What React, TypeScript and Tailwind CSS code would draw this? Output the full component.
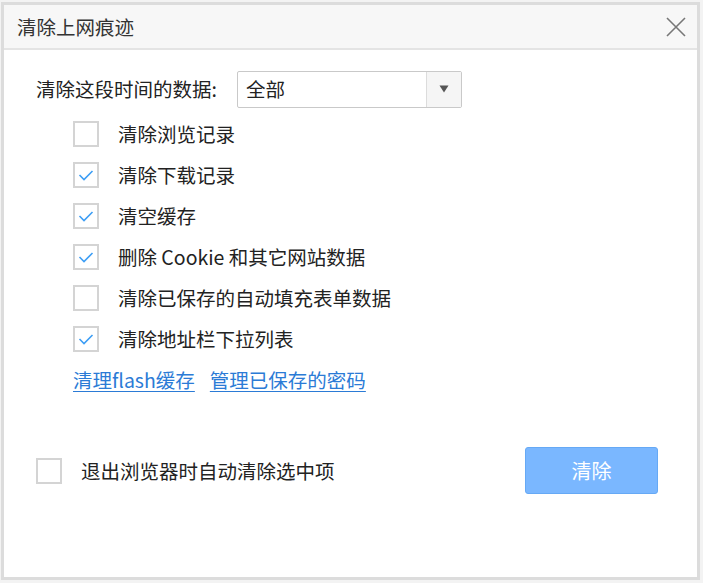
const items = [
  { label: '清除浏览记录', checked: false },
  { label: '清除下载记录', checked: true },
  { label: '清空缓存', checked: true },
  { label: '删除 Cookie 和其它网站数据', checked: true },
  { label: '清除已保存的自动填充表单数据', checked: false },
  { label: '清除地址栏下拉列表', checked: true },
];

const Check = ({ checked }: { checked: boolean }) => (
  <span className="w-[26px] h-[26px] border-2 border-[#d4d4d4] bg-white flex items-center justify-center shrink-0">
    {checked && (
      <svg width="16" height="12" viewBox="0 0 16 12" fill="none">
        <path d="M1.5 6 L6 10.5 L14.5 2" stroke="#3d9ef5" strokeWidth="1.6" />
      </svg>
    )}
  </span>
);

export default function App() {
  return (
    <div
      className="w-[703px] h-[583px] bg-[#f3f3f3] pl-[1px] pt-[2px] text-[#222]"
      style={{ fontFamily: '"Microsoft YaHei", "Noto Sans CJK SC", sans-serif' }}
    >
      <div className="w-[699px] h-[578px] border-[3px] border-[#dcdcdc] bg-white flex flex-col">
        {/* Title */}
        <div className="h-[45px] bg-[#f7f7f7] border-b-2 border-[#e4e4e4] flex items-center justify-between pl-[13px] pr-[10px]">
          <span className="text-[19.5px] text-[#333]">清除上网痕迹</span>
          <svg width="22" height="22" viewBox="0 0 22 22" fill="none">
            <path d="M2 2 L20 20 M20 2 L2 20" stroke="#777" strokeWidth="1.6" />
          </svg>
        </div>

        {/* Body */}
        <div className="flex flex-col pl-[32px] pt-[20px]">
          <div className="flex items-center gap-[20px] h-[38px]">
            <span className="text-[19.5px]">清除这段时间的数据:</span>
            <div className="w-[225px] h-[37px] border border-[#c9c9c9] rounded-[2px] flex items-stretch">
              <span className="flex-1 flex items-center pl-[8px] text-[19.5px]">全部</span>
              <span className="w-[35px] bg-[#f5f5f5] border-l border-[#dcdcdc] flex items-center justify-center">
                <svg width="10" height="8" viewBox="0 0 10 8">
                  <path d="M0.5 0.5 H9.5 L5 7.5 Z" fill="#555" />
                </svg>
              </span>
            </div>
          </div>

          <div className="flex flex-col gap-[15px] pl-[37px] mt-[13px]">
            {items.map((it) => (
              <div key={it.label} className="flex items-center gap-[19px] h-[26px]">
                <Check checked={it.checked} />
                <span className="text-[19.5px] leading-none">{it.label}</span>
              </div>
            ))}
          </div>

          <div className="flex gap-[15px] pl-[37px] mt-[13px] text-[19.5px] text-[#2b7bd6]">
            <a className="underline underline-offset-[3px]">清理flash缓存</a>
            <a className="underline underline-offset-[3px]">管理已保存的密码</a>
          </div>
        </div>

        {/* Footer */}
        <div className="flex items-center justify-between pl-[32px] pr-[39px] mt-[53px]">
          <div className="flex items-center gap-[19px]">
            <span className="w-[26px] h-[26px] border-2 border-[#d4d4d4] bg-white" />
            <span className="text-[19.5px]">退出浏览器时自动清除选中项</span>
          </div>
          <button className="w-[133px] h-[47px] bg-[#7ab7ff] border border-[#66a9f5] rounded-[3px] text-white text-[20px]">
            清除
          </button>
        </div>
      </div>
    </div>
  );
}
